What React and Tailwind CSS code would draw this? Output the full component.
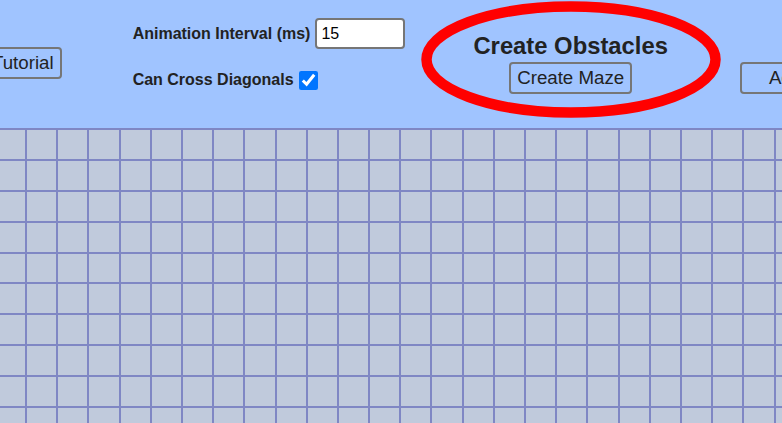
import React from 'react';

const COLS = 26;
const ROWS = 10;

const btn =
  'shrink-0 h-[32px] px-[6px] border-2 border-[#767676] rounded-[4px] bg-transparent text-[18.7px] leading-none text-[#222] whitespace-nowrap';

export default function App() {
  const cells = Array.from({ length: COLS * ROWS });

  return (
    <div className="w-screen h-screen overflow-hidden bg-[#c0cadc] font-['Liberation_Sans',Arial,sans-serif] text-[#222]">
      <div className="relative h-[128px] bg-[#a0c4ff] flex items-start overflow-hidden">
        <button className={`${btn} ml-[-16px] mt-[47px]`}>Tutorial</button>

        <div className="shrink-0 ml-[71px] mt-[18px] flex flex-col gap-[19px]">
          <div className="flex items-center gap-[5px]">
            <span className="text-[16px] font-bold whitespace-nowrap">Animation Interval (ms)</span>
            <input
              readOnly
              value="15"
              className="w-[90px] h-[31px] px-[4px] bg-white border-2 border-[#767676] rounded-[4px] text-[16px] text-black outline-none"
            />
          </div>
          <div className="flex items-center gap-[5px]">
            <span className="text-[16px] font-bold whitespace-nowrap">Can Cross Diagonals</span>
            <input type="checkbox" checked readOnly className="m-0 w-[19px] h-[19px] accent-[#0075ff]" />
          </div>
        </div>

        <div className="shrink-0 ml-[68px] mt-[32px] flex flex-col items-center gap-[3px]">
          <h3 className="text-[23.8px] font-bold leading-[27px] whitespace-nowrap">Create Obstacles</h3>
          <button className={btn}>Create Maze</button>
        </div>

        <button className={`${btn} ml-[72px] mt-[62px] pl-[27px]`}>Add Weights</button>

        <svg className="absolute left-[416px] top-0 w-[310px] h-[125px] pointer-events-none" viewBox="0 0 310 125">
          <ellipse cx="155" cy="59.5" rx="144.5" ry="53" fill="none" stroke="#ff0000" strokeWidth="10.5" />
        </svg>
      </div>

      <div className="ml-[-6.2px] p-[2px] bg-[#7f87c4] inline-grid grid-cols-[repeat(26,29.2px)] auto-rows-[28.9px] gap-[2px]">
        {cells.map((_, i) => (
          <div key={i} className="bg-[#c0cadc]" />
        ))}
      </div>
    </div>
  );
}
